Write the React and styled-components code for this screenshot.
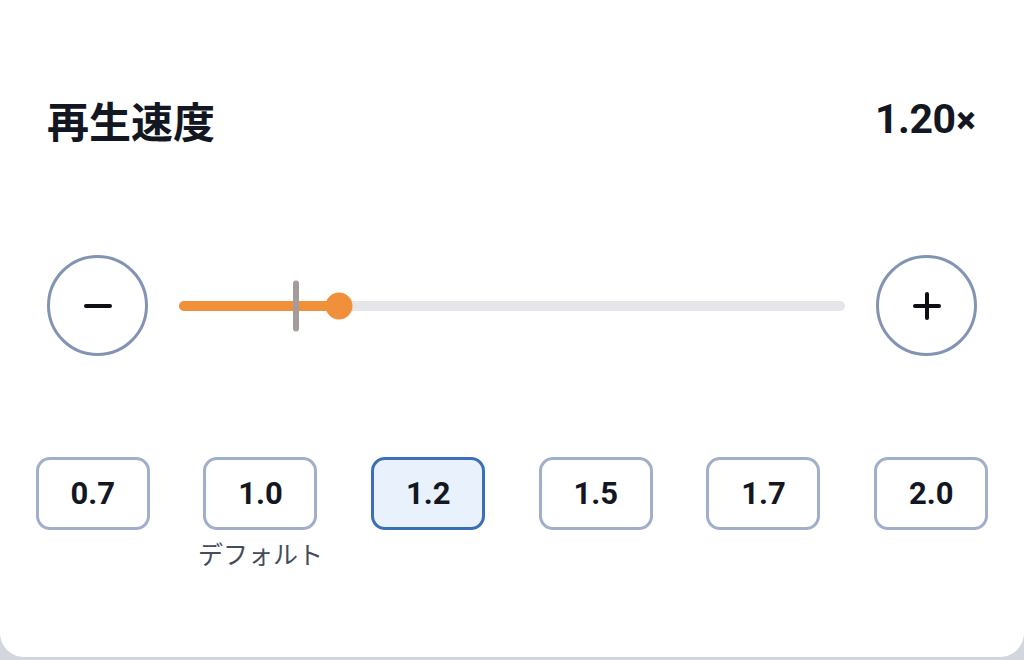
import React, { useState } from 'react';
import styled, { createGlobalStyle } from 'styled-components';

const GlobalStyle = createGlobalStyle`
  html, body {
    margin: 0;
    padding: 0;
    background: #d3d6dc;
  }
  * {
    box-sizing: border-box;
  }
`;

const PRESETS = ['0.7', '1.0', '1.2', '1.5', '1.7', '2.0'];
const MIN = 0.455;
const MAX = 3.555;

const pct = (v) => ((v - MIN) / (MAX - MIN)) * 100;

const App = () => {
    const [speed, setSpeed] = useState(1.2);

    const step = (d) => {
        setSpeed((s) => Math.min(MAX, Math.max(MIN, Math.round((s + d) * 10) / 10)));
    };

    return (
        <>
            <GlobalStyle />
            <Card>
                <Header>
                    <Title>再生速度</Title>
                    <Value>
                        {speed.toFixed(2)}
                        <Times>×</Times>
                    </Value>
                </Header>

                <SliderRow>
                    <RoundButton aria-label="遅く" onClick={() => step(-0.1)}>
                        <Minus />
                    </RoundButton>
                    <Track>
                        <Fill style={{ width: `${pct(speed)}%` }} />
                        <DefaultTick style={{ left: `${pct(1.0)}%` }} />
                        <Thumb style={{ left: `${pct(speed)}%` }} />
                    </Track>
                    <RoundButton aria-label="速く" onClick={() => step(0.1)}>
                        <Minus />
                        <PlusBar />
                    </RoundButton>
                </SliderRow>

                <Presets>
                    {PRESETS.map((p) => (
                        <PresetCell key={p}>
                            <PresetButton
                                $active={Number(p) === speed}
                                onClick={() => setSpeed(Number(p))}
                            >
                                {p}
                            </PresetButton>
                            {p === '1.0' && <DefaultLabel>デフォルト</DefaultLabel>}
                        </PresetCell>
                    ))}
                </Presets>
            </Card>
        </>
    );
};

export default App;

const Card = styled.div`
  height: 657px;
  background: #ffffff;
  border-radius: 0 0 24px 24px;
  padding: 96px 9px 0;
  display: flex;
  flex-direction: column;
`;

const Header = styled.div`
  display: flex;
  align-items: center;
  justify-content: space-between;
  height: 48px;
  padding: 0 40px 0 38px;
`;

const Title = styled.h1`
  margin: 0;
  font-family: "Noto Sans CJK JP", "Noto Sans", sans-serif;
  font-size: 42px;
  line-height: 48px;
  font-weight: 700;
  color: #121722;
`;

const Value = styled.div`
  font-family: Roboto, "Liberation Sans", sans-serif;
  font-size: 41px;
  line-height: 48px;
  font-weight: 700;
  color: #121722;
  letter-spacing: -0.5px;
`;

const Times = styled.span`
  font-size: 36px;
  font-weight: 900;
  margin-left: 1px;
`;

const SliderRow = styled.div`
  display: flex;
  align-items: center;
  margin-top: 111px;
  padding: 0 38px;
`;

const RoundButton = styled.button`
  position: relative;
  flex: none;
  width: 101px;
  height: 101px;
  border-radius: 50%;
  border: 3.5px solid #8294b3;
  background: #ffffff;
  padding: 0;
  cursor: pointer;
`;

const Minus = styled.span`
  position: absolute;
  left: 50%;
  top: 50%;
  width: 28px;
  height: 4px;
  border-radius: 2px;
  background: #0d0f14;
  transform: translate(-50%, -50%);
`;

const PlusBar = styled(Minus)`
  width: 4px;
  height: 28px;
`;

const Track = styled.div`
  position: relative;
  flex: 1;
  height: 10px;
  margin: 0 31px;
  border-radius: 5px;
  background: #e5e5ea;
`;

const Fill = styled.div`
  height: 100%;
  border-radius: 5px;
  background: #f0903a;
`;

const DefaultTick = styled.span`
  position: absolute;
  top: 50%;
  width: 6px;
  height: 51px;
  border-radius: 3px;
  background: #a49b9b;
  transform: translate(-50%, -50%);
`;

const Thumb = styled.span`
  position: absolute;
  top: 50%;
  width: 27px;
  height: 27px;
  border-radius: 50%;
  background: #f0903a;
  transform: translate(-50%, -50%);
`;

const Presets = styled.div`
  display: grid;
  grid-template-columns: repeat(6, 1fr);
  margin-top: 101px;
`;

const PresetCell = styled.div`
  display: flex;
  flex-direction: column;
  align-items: center;
`;

const PresetButton = styled.button`
  width: 114px;
  height: 73px;
  border-radius: 14px;
  border: 3.5px solid ${(p) => (p.$active ? '#3b70b6' : '#a1afcb')};
  background: ${(p) => (p.$active ? '#e8f1fc' : '#ffffff')};
  font-family: Roboto, "Liberation Sans", sans-serif;
  font-size: 31px;
  font-weight: 700;
  color: #121722;
  cursor: pointer;
`;

const DefaultLabel = styled.div`
  margin-top: 7px;
  font-family: "Noto Sans CJK JP", "Noto Sans", sans-serif;
  font-size: 25px;
  line-height: 32px;
  color: #454c5a;
`;
